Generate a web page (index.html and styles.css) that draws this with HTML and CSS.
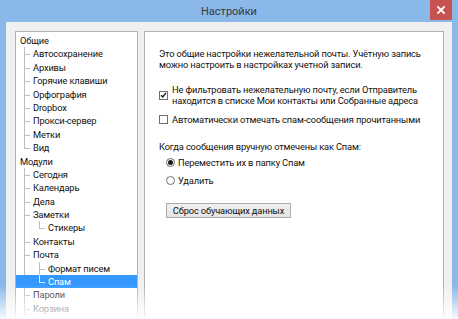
FILE: index.html
```html
<!DOCTYPE html>
<html lang="ru">
<head>
<meta charset="utf-8">
<title>Настройки</title>
<link rel="stylesheet" href="styles.css">
</head>
<body>
<div class="window">
  <div class="titlebar">
    <span class="spacer"></span>
    <span class="title">Настройки</span>
    <span class="close-wrap"><span class="close"><svg width="8" height="8" viewBox="0 0 8 8"><path d="M1 1L7 7M7 1L1 7" stroke="#fff" stroke-width="1.8" stroke-linecap="square"/></svg></span></span>
  </div>
  <div class="client">
    <div class="tree">
      <ul class="nodes">
        <li class="node">
          <div class="row l0">Общие</div>
          <ul class="nodes">
            <li class="node child c1"><div class="row l1">Автосохранение</div></li>
            <li class="node child c1"><div class="row l1">Архивы</div></li>
            <li class="node child c1"><div class="row l1">Горячие клавиши</div></li>
            <li class="node child c1"><div class="row l1">Орфография</div></li>
            <li class="node child c1"><div class="row l1">Dropbox</div></li>
            <li class="node child c1"><div class="row l1">Прокси-сервер</div></li>
            <li class="node child c1"><div class="row l1">Метки</div></li>
            <li class="node child c1 last"><div class="row l1">Вид</div></li>
          </ul>
        </li>
        <li class="node">
          <div class="row l0">Модули</div>
          <ul class="nodes">
            <li class="node child c1"><div class="row l1">Сегодня</div></li>
            <li class="node child c1"><div class="row l1">Календарь</div></li>
            <li class="node child c1"><div class="row l1">Дела</div></li>
            <li class="node child c1">
              <div class="row l1">Заметки</div>
              <ul class="nodes">
                <li class="node child c2 last"><div class="row l2">Стикеры</div></li>
              </ul>
            </li>
            <li class="node child c1"><div class="row l1">Контакты</div></li>
            <li class="node child c1">
              <div class="row l1">Почта</div>
              <ul class="nodes">
                <li class="node child c2"><div class="row l2">Формат писем</div></li>
                <li class="node child c2 last"><div class="row l2 selected">Спам</div></li>
              </ul>
            </li>
            <li class="node child c1"><div class="row l1">Пароли</div></li>
            <li class="node child c1"><div class="row l1">Корзина</div></li>
          </ul>
        </li>
      </ul>
    </div>
    <div class="pane">
      <p class="intro">Это общие настройки нежелательной почты. Учётную запись<br>можно настроить в настройках учетной записи.</p>
      <div class="option cb1">
        <span class="checkbox checked"><svg width="8" height="8" viewBox="0 0 8 8"><path d="M1.2 4.2L3.2 6.2L6.8 1.6" fill="none" stroke="#111" stroke-width="1.5"/></svg></span>
        <span class="label">Не фильтровать нежелательную почту, если Отправитель<br>находится в списке Мои контакты или Собранные адреса</span>
      </div>
      <div class="option cb2">
        <span class="checkbox"></span>
        <span class="label">Автоматически отмечать спам-сообщения прочитанными</span>
      </div>
      <p class="group-label">Когда сообщения вручную отмечены как Спам:</p>
      <div class="radio-row r1"><span class="radio on"></span><span class="label">Переместить их в папку Спам</span></div>
      <div class="radio-row r2"><span class="radio"></span><span class="label">Удалить</span></div>
      <div class="btn-row"><span class="button">Сброс обучающих данных</span></div>
    </div>
  </div>
  <div class="fade"></div>
</div>
</body>
</html>
```
FILE: styles.css
```css
* { box-sizing: border-box; }
html, body { margin: 0; padding: 0; }
body {
  width: 458px;
  height: 319px;
  overflow: hidden;
  background: #fff;
  font-family: Roboto, "Liberation Sans", sans-serif;
  font-size: 9.3px;
  letter-spacing: -0.15px;
  color: #111;
}
.window {
  position: relative;
  width: 458px;
  height: 319px;
  background: #8ab8e8;
  padding: 0 6px;
  display: flex;
  flex-direction: column;
  overflow: hidden;
}
.titlebar {
  height: 22px;
  flex: none;
  display: grid;
  grid-template-columns: 1fr auto 1fr;
  align-items: start;
  margin: 0 -6px;
}
.title {
  font-size: 11px;
  letter-spacing: 0;
  line-height: 23px;
  color: #3a3a3a;
}
.close-wrap {
  display: flex;
  justify-content: flex-end;
  padding-right: 6px;
}
.close {
  width: 22px;
  height: 20px;
  background: #c75250;
  display: flex;
  align-items: center;
  justify-content: center;
}
.client {
  flex: 1;
  background: #f0f0f0;
  display: flex;
  gap: 6px;
  padding: 9px 8px 0 9px;
  min-height: 0;
}
.tree {
  width: 123px;
  flex: none;
  background: #fff;
  border: 1px solid #b2b2b2;
  border-bottom: none;
  padding-top: 2px;
  overflow: hidden;
}
.nodes {
  list-style: none;
  margin: 0;
  padding: 0;
}
.node { position: relative; }
.row {
  position: relative;
  height: 13.4px;
  line-height: 13.4px;
  white-space: nowrap;
}
.row.l0 { padding-left: 4px; }
.row.l1 { padding-left: 17px; }
.row.l2 { padding-left: 32px; }
.row.selected { background: #3399ff; color: #fff; }
.child::before {
  content: "";
  position: absolute;
  top: 0;
  bottom: 0;
  border-left: 1px solid #bdbdbd;
}
.child.last::before { bottom: auto; height: 7px; }
.c1::before { left: 8px; }
.c2::before { left: 23px; }
.child > .row::before {
  content: "";
  position: absolute;
  top: 7px;
  width: 6px;
  border-top: 1px solid #bdbdbd;
}
.c1 > .row::before { left: 8px; }
.c2 > .row::before { left: 23px; }
.c2 > .row.selected::before { border-top-color: #d8ecff; }
.c2 > .row.selected::after {
  content: "";
  position: absolute;
  left: 23px;
  top: 0;
  height: 7px;
  border-left: 1px solid #d8ecff;
}
.pane {
  width: 300px;
  flex: none;
  background: #fff;
  border: 1px solid #b2b2b2;
  border-bottom: none;
  padding: 16px 14px 0 14px;
  line-height: 11px;
  white-space: nowrap;
}
.intro { margin: 0; }
.option {
  display: flex;
  align-items: center;
  gap: 4px;
}
.cb1 { margin-top: 14px; }
.cb2 { margin-top: 8px; }
.checkbox {
  width: 9px;
  height: 9px;
  flex: none;
  border: 1px solid #707070;
  background: #fff;
  display: flex;
  align-items: center;
  justify-content: center;
}
.group-label { margin: 16px 0 0 0; }
.radio-row {
  display: flex;
  align-items: center;
  gap: 3px;
  margin-left: 7px;
}
.r1 { margin-top: 5px; }
.r2 { margin-top: 7px; }
.radio {
  width: 9px;
  height: 9px;
  border: 1px solid #707070;
  border-radius: 50%;
  background: #fff;
  display: flex;
  align-items: center;
  justify-content: center;
}
.radio.on::after {
  content: "";
  width: 5px;
  height: 5px;
  border-radius: 50%;
  background: #1a1a1a;
}
.btn-row { margin: 17px 0 0 7px; }
.button {
  display: inline-block;
  width: 125px;
  height: 15px;
  line-height: 13px;
  text-align: center;
  border: 1px solid #acacac;
  background: linear-gradient(#f0f0f0, #e5e5e5);
}
.fade {
  position: absolute;
  left: 0;
  right: 0;
  bottom: 0;
  height: 34px;
  background: linear-gradient(rgba(255,255,255,0), rgba(255,255,255,0.92));
  pointer-events: none;
}
```
